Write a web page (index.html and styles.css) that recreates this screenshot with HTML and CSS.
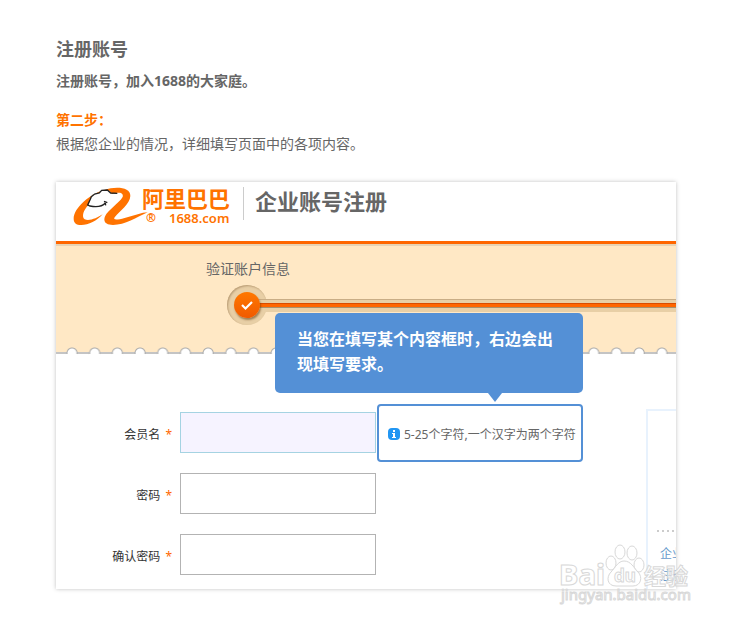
FILE: index.html
```html
<!DOCTYPE html>
<html lang="zh-CN">

<head>
    <meta charset="UTF-8">
    <meta name="viewport" content="width=device-width, initial-scale=1.0">
    <title>注册账号</title>
    <link rel="stylesheet" href="styles.css">
</head>

<body>

    <div class="container">
        <h1>注册账号</h1>
        <p class="intro">注册账号，加入1688的大家庭。</p>
        <h2>第二步：</h2>
        <p class="desc">根据您企业的情况，详细填写页面中的各项内容。</p>

        <div class="card">
            <div class="clip">
                <div class="card-header">
                    <svg class="logo" viewBox="0 0 160 42" role="img" aria-label="阿里巴巴 1688.com">
                        <g transform="scale(0.3333) translate(-3 -3)">
                            <path fill="#ff7300" d="M11 104 C11 75 56 26 122 13 C152 8 182 14 181 36 C180 60 150 80 134 100 C128 109 142 108 164 102 L219 86 L233 85 C200 100 165 123 129 123 C96 123 98 100 116 82 C134 62 164 42 158 32 C154 24 142 26 126 30 L118 20 L94 20 L88 26 L66 33 L60 48 L56 62 C40 78 34 98 44 106 C58 112 82 102 98 91 C82 110 55 123 34 123 C18 123 11 116 11 104 Z" />
                            <path fill="none" stroke="#222" stroke-width="4" d="M54 61 L61 46 L64 38 L74 30 L88 27 L95 19 L112 18 L122 27 L142 28 M51 62 L60 66 C80 70 98 66 106 57 M102 52 L112 56 M106 57 L107 64" />
                        </g>
                        <text class="logo-name" x="71" y="22">阿里巴巴</text>
                        <text class="logo-reg" x="75" y="37">®</text>
                        <text class="logo-site" x="98" y="38">1688.com</text>
                    </svg>
                    <span class="header-title">企业账号注册</span>
                </div>

                <div class="band">
                    <div class="step-name">验证账户信息</div>
                    <div class="progress">
                        <span class="step-dot">
                            <svg class="step-icon" viewBox="0 0 26 26">
                                <path fill="none" stroke="#fff" stroke-width="2.2" d="M8 13 L11.500 16.500 L18 10" />
                            </svg>
                        </span>
                        <span class="track"></span>
                    </div>
                    <div class="scallops"></div>
                </div>

                <div class="content">
                    <form class="form">
                        <div class="row">
                            <label for="memberName">会员名 <span class="star">*</span></label>
                            <input class="active" type="text" id="memberName" name="memberName" required>
                            <div class="tip">
                                <div class="callout">当您在填写某个内容框时，右边会出现填写要求。</div>
                                <svg class="info" viewBox="0 0 12 12">
                                    <rect width="12" height="12" rx="4" fill="#2196f3" />
                                    <path fill="#fff" d="M5 2h2v2H5z M4 5h3v4h1v1H4V9h1V6H4z" />
                                </svg>
                                <span>5-25个字符,一个汉字为两个字符</span>
                            </div>
                        </div>
                        <div class="row">
                            <label for="password">密码 <span class="star">*</span></label>
                            <input type="password" id="password" name="password" required>
                        </div>
                        <div class="row">
                            <label for="confirmPassword">确认密码 <span class="star">*</span></label>
                            <input type="password" id="confirmPassword" name="confirmPassword" required>
                        </div>
                    </form>
                    <div class="side">
                        <a href="#">企业</a>
                        <a href="#">注册</a>
                    </div>
                </div>
            </div>

            <svg class="watermark" viewBox="0 0 136 68" role="img" aria-label="Baidu经验 jingyan.baidu.com">
                <g class="mark">
                    <ellipse cx="55" cy="24" rx="5" ry="7" />
                    <ellipse cx="64" cy="13" rx="5" ry="7" />
                    <ellipse cx="76" cy="14" rx="5" ry="7" />
                    <ellipse cx="83" cy="26" rx="5" ry="7" />
                    <path d="M68 22 C75 22 78 29 82 33 C87 38 85 47 77 47 H60 C51 47 50 38 55 33 C59 29 62 22 68 22 Z" />
                    <text class="mark-name" x="3" y="46">Bai</text>
                    <text class="mark-du" x="58" y="43">du</text>
                    <text class="mark-cn" x="88" y="45">经验</text>
                    <text class="mark-url" x="5" y="61">jingyan.baidu.com</text>
                </g>
            </svg>
        </div>
    </div>

</body>

</html>
```
FILE: styles.css
```css
body {
    font-family: "Noto Sans", "Noto Sans CJK SC", sans-serif;
    background-color: #fff;
    color: #666;
    margin: 0;
    padding: 0;
}

.container {
    padding: 36px 54px 30px 56px;
}

h1 {
    font-size: 18px;
    line-height: 26px;
    margin: 0 0 7px;
}

.intro {
    font-size: 14px;
    line-height: 24px;
    font-weight: bold;
    margin: 0 0 15px;
}

h2 {
    font-size: 14px;
    line-height: 24px;
    color: #ff7300;
    margin: 0;
}

.desc {
    font-size: 14px;
    line-height: 24px;
    margin: 0 0 26px;
}

.card {
    position: relative;
    box-shadow: 0 0 4px rgba(0, 0, 0, 0.25);
}

.clip {
    overflow: hidden;
}

.card-header {
    display: flex;
    align-items: flex-start;
    height: 59px;
    padding-left: 15px;
    border-bottom: 3px solid #f60;
}

.logo {
    width: 160px;
    height: 42px;
    margin-top: 3px;
}

.logo-name {
    font-size: 22px;
    font-weight: bold;
    fill: #ff7300;
}

.logo-reg {
    font-size: 12px;
    font-weight: bold;
    fill: #ff7300;
}

.logo-site {
    font-size: 13px;
    font-weight: 600;
    fill: #ff7300;
}

.header-title {
    margin: 5px 0 0 12px;
    padding: 0 0 4px 11px;
    border-left: 1px solid #ccc;
    font-size: 22px;
    line-height: 29px;
    font-weight: bold;
}

.band {
    position: relative;
    height: 110px;
    background-color: #ffe8c5;
    border-top: 2px solid #e8d3b3;
    border-bottom: 2px solid #c4c4c4;
    box-sizing: border-box;
}

.step-name {
    padding: 13px 0 0 150px;
    font-size: 14px;
    line-height: 20px;
}

.progress {
    display: flex;
    align-items: center;
    margin: 6px 0 0 171px;
}

.step-dot {
    display: flex;
    align-items: center;
    justify-content: center;
    width: 40px;
    height: 40px;
    border-radius: 50%;
    background-color: #e8cfa6;
    box-shadow: inset 1px 1px 2px #b89b74;
}

.step-icon {
    position: relative;
    z-index: 1;
    width: 26px;
    height: 26px;
    border-radius: 50%;
    background: linear-gradient(#ff7800, #f05a00);
    box-shadow: 1px 2px 2px rgba(90, 50, 0, 0.5);
}

/* groove with the orange line, starts under the round icon */
.track {
    flex: 1;
    height: 13px;
    margin-left: -10px;
    background: linear-gradient(#c9ad86 0 1px, #e8cfa6 1px 4px, #d94c00 4px 5px, #f60 5px 8px, #a8906c 8px 9px, #e8cfa6 9px);
}

.scallops {
    position: absolute;
    left: 0;
    right: 0;
    bottom: -7px;
    height: 12px;
    padding: 0 3px 0 5px;
    background-image: radial-gradient(circle at 11px 0, #fff 6px, transparent 7px), radial-gradient(circle at 11px 6px, #fff 4px, #aaa 5px, transparent 6px);
    background-size: 22px 5px, 22px 12px;
    background-position: left bottom, left top;
    background-repeat: space no-repeat;
    background-origin: content-box;
}

.content {
    display: flex;
    justify-content: space-between;
}

.form {
    padding: 58px 0 14px;
}

.row {
    display: flex;
    align-items: center;
    position: relative;
    margin-bottom: 20px;
}

.row:last-child {
    margin-bottom: 0;
}

label {
    width: 116px;
    margin-right: 8px;
    padding-top: 2px;
    text-align: right;
    font-size: 12px;
    color: #333;
}

.star {
    margin-left: 2px;
    color: #f60;
}

input {
    width: 196px;
    height: 41px;
    padding: 8px;
    border: 1px solid #b3b3b3;
    box-sizing: border-box;
}

input.active {
    background-color: #f6f3ff;
    border-color: #a5d3e2;
}

.tip {
    position: absolute;
    top: -8px;
    left: 321px;
    display: flex;
    align-items: center;
    gap: 4px;
    width: 206px;
    height: 58px;
    padding: 2px 0 0 9px;
    border: 2px solid #5490d6;
    border-radius: 4px;
    box-sizing: border-box;
    font-size: 12px;
    white-space: nowrap;
}

.info {
    width: 12px;
    height: 12px;
}

.callout {
    position: absolute;
    right: -2px;
    bottom: 67px;
    width: 308px;
    padding: 14px 20px 16px 22px;
    border-radius: 5px;
    box-sizing: border-box;
    background-color: #5490d6;
    color: #fff;
    font-size: 16px;
    line-height: 25px;
    font-weight: bold;
    white-space: normal;
}

.callout::after {
    content: "";
    position: absolute;
    right: 81px;
    top: 100%;
    border: 7px solid transparent;
    border-top: 9px solid #5490d6;
    border-bottom: none;
}

.side {
    display: flex;
    flex-direction: column;
    width: 30px;
    margin-top: 55px;
    padding: 119px 0 0 12px;
    border-top: 2px solid #e8f2fd;
    border-left: 2px solid #e8f2fd;
    box-sizing: border-box;
    overflow: hidden;
}

.side::before {
    content: "";
    height: 2px;
    margin: 0 0 11px -3px;
    background: repeating-linear-gradient(90deg, #ccc 0 2px, transparent 2px 5px);
}

.side a {
    font-size: 12px;
    line-height: 22px;
    color: #69c;
    text-decoration: none;
    white-space: nowrap;
}

.watermark {
    position: absolute;
    right: -16px;
    bottom: -18px;
    width: 136px;
    height: 68px;
}

.mark {
    fill: #fff;
    fill-opacity: 0.6;
    stroke: #d8d8d8;
    stroke-width: 1;
}

.mark-name {
    font-size: 29px;
    font-weight: 800;
}

.mark-du {
    font-size: 17px;
    font-weight: bold;
}

.mark-cn {
    font-size: 22px;
    font-weight: bold;
}

.mark-url {
    font-size: 15px;
}
```
